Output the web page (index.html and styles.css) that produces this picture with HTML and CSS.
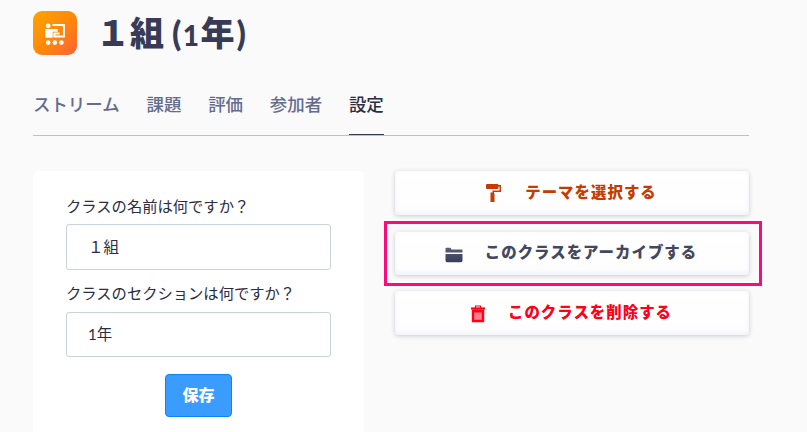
FILE: index.html
```html
<!DOCTYPE html>
<html lang="ja">
<head>
<meta charset="utf-8">
<title>１組 (1年)</title>
<link rel="stylesheet" href="styles.css">
</head>
<body>
<div class="page">
  <header class="head">
    <div class="badge">
      <svg viewBox="0 0 44 44" width="44" height="44" fill="#fff">
        <circle cx="15.2" cy="14.8" r="2.4"/>
        <path d="M12.4 18.100h12.300v2.700h-5v5.900h-7.300z"/>
        <path d="M19.500 14.100h11.400v11.500h-9.500v-3h5.200" fill="none" stroke="#fff" stroke-width="2"/>
        <circle cx="15.200" cy="31.600" r="2.300"/><circle cx="21.800" cy="31.600" r="2.300"/><circle cx="28.400" cy="31.600" r="2.300"/>
      </svg>
    </div>
    <h1 class="title"><span class="name">１組</span><span class="paren">(</span><span class="num">1</span><span class="year">年</span><span class="paren">)</span></h1>
  </header>
  <nav class="tabs">
    <a class="tab">ストリーム</a><a class="tab">課題</a><a class="tab">評価</a><a class="tab">参加者</a><a class="tab active">設定</a>
  </nav>
  <main class="content">
    <form class="card">
      <label class="label">クラスの名前は何ですか？</label>
      <div class="field">１組</div>
      <label class="label second">クラスのセクションは何ですか？</label>
      <div class="field short"><span class="digit">1</span>年</div>
      <button class="save" type="button">保存</button>
    </form>
    <div class="actions">
      <div class="action theme">
        <svg width="18" height="20" viewBox="0 0 18 20" fill="currentColor"><path d="M2 1h10.500a1 1 0 0 1 1 1H16v7H9v1.500h.5V19h-4V9.500H7.500V7.500h7V3.500h-1V5a1 1 0 0 1-1 1H2a1 1 0 0 1-1-1V2a1 1 0 0 1 1-1z"/></svg>
        <span>テーマを選択する</span>
      </div>
      <div class="action archive">
        <svg width="18" height="16" viewBox="0 0 18 16"><defs><linearGradient id="g" x1="0" y1="0" x2="0" y2="1"><stop offset="0" stop-color="#5b5f7d"/><stop offset="1" stop-color="#383b56"/></linearGradient></defs><path fill="url(#g)" d="M.5 5.500V1.500a.8.8 0 0 1 .8-.8H5.500l1 1.800h10.200a.8.8 0 0 1 .8.8v2.200zM.5 7h17v6.500a1.700 1.700 0 0 1-1.700 1.700H2.200A1.700 1.700 0 0 1 .5 13.500z"/></svg>
        <span>このクラスをアーカイブする</span>
      </div>
      <div class="action delete">
        <svg width="16" height="18" viewBox="0 0 16 18" fill="none" stroke="currentColor"><path d="M5.500 3V1h5v2" stroke-width="1.200"/><path d="M1 3.500h14" stroke-width="2.200"/><path d="M3 5v11h10V5" stroke-width="2.400"/><path d="M2 6h12" stroke-width="3"/><path d="M8 7v9" stroke-width="8" opacity=".5"/></svg>
        <span>このクラスを削除する</span>
      </div>
      <div class="highlight"></div>
    </div>
  </main>
</div>
</body>
</html>
```
FILE: styles.css
```css
* { box-sizing: border-box; }
body {
  margin: 0;
  width: 807px;
  height: 432px;
  overflow: hidden;
  background: #fafafa;
  font-family: "Noto Sans CJK JP", sans-serif;
  color: #2b2d42;
}
.page { width: 716px; margin-left: 33px; padding-top: 11px; }
.head { display: flex; height: 44px; align-items: center; }
.badge {
  width: 44px;
  height: 44px;
  border-radius: 9px;
  background: linear-gradient(135deg, #ffa300 0%, #ff8a08 50%, #ff6038 100%);
}
.badge svg { display: block; }
.title {
  display: flex;
  align-items: baseline;
  margin: 0 0 0 19px;
  font-size: 34px;
  line-height: 44px;
  font-weight: 900;
  color: #383b56;
}
.name { width: 76px; }
.paren { font-family: Lato, sans-serif; font-size: 34px; font-weight: 900; }
.num { width: 19px; text-align: center; font-family: Lato, sans-serif; font-size: 28px; font-weight: 900; }
.year { width: 36px; }
.tabs {
  display: flex;
  gap: 26.800px;
  height: 81px;
  padding-top: 36px;
  border-bottom: 1px solid #bbbfd3;
}
.tab {
  height: 44px;
  font-size: 17.450px;
  line-height: 25px;
  font-weight: 500;
  color: #636b8f;
  white-space: nowrap;
}
.active { color: #2b2d42; border-bottom: 1px solid #383b56; }
.content { display: flex; align-items: flex-start; gap: 31px; margin-top: 35px; }
.card {
  display: flex;
  flex-direction: column;
  width: 331px;
  height: 280px;
  padding: 24px 33px;
  border-radius: 5px;
  background: #fff;
}
.label { height: 29px; font-size: 15.300px; line-height: 20px; white-space: nowrap; }
.second { margin-top: 12px; height: 30px; }
.field {
  height: 46px;
  padding-left: 21px;
  border: 1px solid #c9d3da;
  border-radius: 3px;
  font-size: 15.500px;
  line-height: 42px;
}
.short { height: 45px; line-height: 41px; }
.digit { font-family: Lato, sans-serif; font-size: 15px; }
.save {
  align-self: center;
  width: 67px;
  height: 43px;
  margin-top: 17px;
  padding: 0 0 3px;
  border: 1px solid #0c84f5;
  border-radius: 4px;
  background: #3b9cff;
  color: #fff;
  font: 900 16px/37px "Noto Sans CJK JP", sans-serif;
}
.actions {
  position: relative;
  display: flex;
  flex-direction: column;
  gap: 16px;
  width: 354px;
}
.action {
  display: flex;
  align-items: center;
  justify-content: center;
  height: 44px;
  border-radius: 4px;
  background: linear-gradient(#fff, #fdfdfe);
  box-shadow: 0 1px 4px rgba(56, 59, 86, .25), inset 0 -2px 5px rgba(90, 110, 160, .08);
  font-size: 15.400px;
  line-height: 42px;
  font-weight: 900;
  letter-spacing: 1.050px;
  white-space: nowrap;
  padding-right: 2px;
}
.action svg { margin-right: 22px; flex: none; }
.action span { margin-top: -5px; }
.theme { color: #c43c00; }
.archive { height: 43px; margin-top: 1px; color: #44475f; }
.delete { color: #ff0019; }
.delete svg, .archive svg { position: relative; top: 1px; }
.highlight {
  position: absolute;
  left: -11px;
  top: 50px;
  width: 378px;
  height: 65px;
  border: 3px solid #f90b7c;
}
```
